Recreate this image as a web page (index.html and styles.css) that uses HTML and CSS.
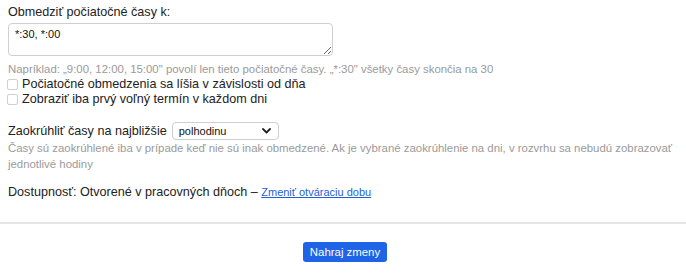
FILE: index.html
```html
<!DOCTYPE html>
<html lang="sk">
<head>
<meta charset="utf-8">
<link rel="stylesheet" href="styles.css">
</head>
<body>
<div class="page">
  <div class="content">
    <label class="label" for="times">Obmedziť počiatočné časy k:</label>
    <textarea id="times" class="times">*:30, *:00</textarea>
    <div class="help">Napríklad: „9:00, 12:00, 15:00" povolí len tieto počiatočné časy. „*:30" všetky časy skončia na 30</div>
    <label class="check"><span class="box"></span>Počiatočné obmedzenia sa líšia v závislosti od dňa</label>
    <label class="check"><span class="box"></span>Zobraziť iba prvý voľný termín v každom dni</label>

    <div class="round">
      <span>Zaokrúhliť časy na najbližšie</span>
      <div class="select">
        <span>polhodinu</span>
        <svg class="chev" width="9" height="6" viewBox="0 0 9 6"><path d="M1 1l3.5 3.5L8 1" fill="none" stroke="#222" stroke-width="1.8" stroke-linecap="round" stroke-linejoin="round"/></svg>
      </div>
    </div>
    <div class="help help-multi">Časy sú zaokrúhlené iba v prípade keď nie sú inak obmedzené. Ak je vybrané zaokrúhlenie na dni, v rozvrhu sa nebudú zobrazovať jednotlivé hodiny</div>

    <div class="avail">Dostupnosť: Otvorené v pracovných dňoch – <a href="#" class="link">Zmeniť otváraciu dobu</a></div>
  </div>
  <div class="footer">
    <button class="btn">Nahraj zmeny</button>
  </div>
</div>
</body>
</html>
```
FILE: styles.css
```css
html, body {
  margin: 0;
  padding: 0;
  background: #fff;
}
body {
  font-family: "Liberation Sans", Arial, sans-serif;
  color: #222;
}
.content {
  padding: 4px 8px 0 8px;
  display: flex;
  flex-direction: column;
  align-items: flex-start;
}
.label {
  font-size: 12.6px;
  line-height: 16px;
  color: #222;
}
.times {
  margin-top: 3px;
  width: 325px;
  height: 33px;
  box-sizing: border-box;
  border: 1px solid #cfcfcf;
  border-radius: 4px;
  padding: 4px 6px;
  font-family: inherit;
  font-size: 11px;
  color: #111;
  resize: vertical;
  outline: none;
}
.help {
  font-size: 11.4px;
  line-height: 16px;
  color: #9a9a9a;
  margin-top: 5px;
}
.check {
  display: flex;
  align-items: center;
  font-size: 12.6px;
  line-height: 15px;
  color: #222;
}
.box {
  width: 9px;
  height: 9px;
  border: 1px solid #cfcfcf;
  border-radius: 2px;
  margin-right: 4px;
  margin-left: -1px;
}
.round {
  display: flex;
  align-items: center;
  gap: 5px;
  margin-top: 15px;
  font-size: 12.6px;
}
.select {
  width: 107px;
  height: 18px;
  box-sizing: border-box;
  border: 1px solid #cfcfcf;
  border-radius: 4px;
  display: flex;
  align-items: center;
  justify-content: space-between;
  padding: 0 7px 0 6px;
  font-size: 11px;
  color: #111;
}
.help-multi {
  margin-top: 0;
}
.avail {
  margin-top: 12px;
  font-size: 12.6px;
  line-height: 16px;
}
.link {
  color: #1f5fd6;
  font-size: 11px;
}
.footer {
  margin-top: 22px;
  border-top: 2px solid #e6e6e6;
  display: flex;
  justify-content: center;
  padding-top: 18px;
}
.btn {
  background: #1f63e6;
  color: #fff;
  border: none;
  border-radius: 3px;
  height: 20px;
  padding: 0 7px;
  font-family: inherit;
  font-size: 11.4px;
  margin-left: 4px;
}
```
